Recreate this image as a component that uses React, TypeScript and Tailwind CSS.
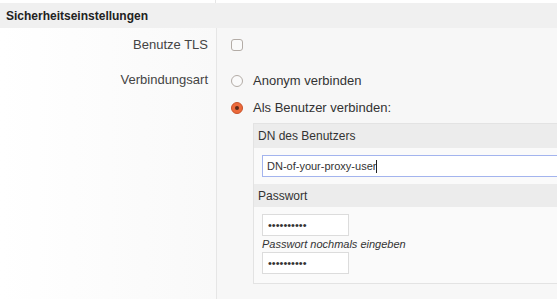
export default function App() {
  const font = { fontFamily: '"Liberation Sans", Arial, sans-serif' };
  return (
    <div className="w-[557px] h-[299px] overflow-hidden bg-[#f7f7f7] text-[#333]" style={font}>
      {/* top strip */}
      <div className="flex h-[3px]">
        <div className="w-[216px] border-r border-[#e6e6e6] bg-white" />
        <div className="flex-1 bg-white" />
      </div>
      {/* section header */}
      <div className="h-[25px] bg-[#f0f0f0] flex items-center pl-[6px] text-[12px] font-bold text-[#222]">
        Sicherheitseinstellungen
      </div>

      <div className="flex h-[271px]">
        {/* label column */}
        <div className="w-[217px] shrink-0 border-r border-[#e6e6e6] bg-gradient-to-r from-white to-[#f9f9f9] text-[13px] text-[#444] text-right pr-[8px]">
          <div className="h-[34px] flex items-center justify-end">Benutze TLS</div>
          <div className="h-[36px] flex items-center justify-end">Verbindungsart</div>
        </div>

        {/* value column */}
        <div className="flex-1 overflow-hidden pl-[14px] text-[13px] text-[#333]">
          <div className="h-[34px] flex items-center">
            <span className="w-[12px] h-[12px] rounded-[3px] border border-[#b3aca6] bg-[#fafafa]" />
          </div>
          <div className="h-[36px] flex items-center gap-[10px] pt-[2px]">
            <span className="w-[12px] h-[12px] rounded-full border border-[#b3aca6] bg-[#fafafa]" />
            <span>Anonym verbinden</span>
          </div>
          <div className="h-[16px] flex items-center gap-[10px] mt-[2px]">
            <span className="w-[12px] h-[12px] rounded-full bg-[#ec6a3b] border border-[#c9532a] flex items-center justify-center">
              <span className="w-[4px] h-[4px] rounded-full bg-[#5a2a1a]" />
            </span>
            <span>Als Benutzer verbinden:</span>
          </div>

          {/* nested credentials box */}
          <div className="ml-[22px] mt-[7px] w-[400px] border border-[#e3e3e3] bg-[#fafafa]">
            <div className="h-[24px] bg-[#ececec] flex items-center pl-[4px] text-[12px] text-[#333]">
              DN des Benutzers
            </div>
            <div className="pl-[8px] pt-[7px] pb-[7px]">
              <div className="h-[22px] border border-[#a3b4ee] bg-white flex items-center pl-[4px] text-[11px] text-[#333]">
                DN-of-your-proxy-user
                <span className="w-[1px] h-[13px] bg-[#222]" />
              </div>
            </div>
            <div className="h-[23px] bg-[#ececec] flex items-center pl-[4px] text-[12px] text-[#333]">
              Passwort
            </div>
            <div className="pl-[8px] pt-[7px] pb-[9px]">
              <div className="w-[87px] h-[22px] border border-[#dcdcdc] bg-white flex items-center pl-[5px] text-[11px] text-[#333]">
                ••••••••••
              </div>
              <div className="italic text-[11px] text-[#333] leading-[16px]">Passwort nochmals eingeben</div>
              <div className="w-[87px] h-[22px] border border-[#dcdcdc] bg-white flex items-center pl-[5px] text-[11px] text-[#333]">
                ••••••••••
              </div>
            </div>
          </div>
        </div>
      </div>
    </div>
  );
}
